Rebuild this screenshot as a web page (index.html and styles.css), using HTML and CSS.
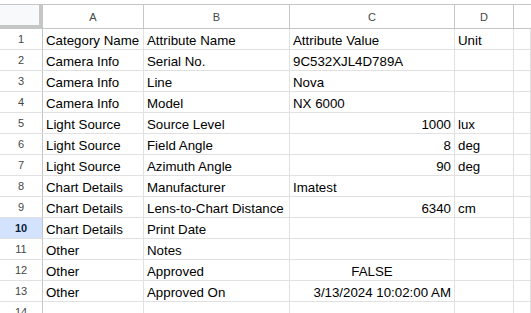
FILE: index.html
```html
<!DOCTYPE html>
<html>
<head>
<meta charset="utf-8">
<link rel="stylesheet" href="styles.css">
</head>
<body>
<div class="sheet">
  <div class="corner"></div>
  <div class="colhead">A</div>
  <div class="colhead">B</div>
  <div class="colhead">C</div>
  <div class="colhead">D</div>
  <div class="colhead last"></div>

  <div class="rowhead">1</div>
  <div class="cell">Category Name</div>
  <div class="cell">Attribute Name</div>
  <div class="cell">Attribute Value</div>
  <div class="cell">Unit</div>
  <div class="cell"></div>

  <div class="rowhead">2</div>
  <div class="cell">Camera Info</div>
  <div class="cell">Serial No.</div>
  <div class="cell">9C532XJL4D789A</div>
  <div class="cell"></div>
  <div class="cell"></div>

  <div class="rowhead">3</div>
  <div class="cell">Camera Info</div>
  <div class="cell">Line</div>
  <div class="cell">Nova</div>
  <div class="cell"></div>
  <div class="cell"></div>

  <div class="rowhead">4</div>
  <div class="cell">Camera Info</div>
  <div class="cell">Model</div>
  <div class="cell">NX 6000</div>
  <div class="cell"></div>
  <div class="cell"></div>

  <div class="rowhead">5</div>
  <div class="cell">Light Source</div>
  <div class="cell">Source Level</div>
  <div class="cell num">1000</div>
  <div class="cell">lux</div>
  <div class="cell"></div>

  <div class="rowhead">6</div>
  <div class="cell">Light Source</div>
  <div class="cell">Field Angle</div>
  <div class="cell num">8</div>
  <div class="cell">deg</div>
  <div class="cell"></div>

  <div class="rowhead">7</div>
  <div class="cell">Light Source</div>
  <div class="cell">Azimuth Angle</div>
  <div class="cell num">90</div>
  <div class="cell">deg</div>
  <div class="cell"></div>

  <div class="rowhead">8</div>
  <div class="cell">Chart Details</div>
  <div class="cell">Manufacturer</div>
  <div class="cell">Imatest</div>
  <div class="cell"></div>
  <div class="cell"></div>

  <div class="rowhead">9</div>
  <div class="cell">Chart Details</div>
  <div class="cell">Lens-to-Chart Distance</div>
  <div class="cell num">6340</div>
  <div class="cell">cm</div>
  <div class="cell"></div>

  <div class="rowhead selected">10</div>
  <div class="cell">Chart Details</div>
  <div class="cell">Print Date</div>
  <div class="cell"></div>
  <div class="cell"></div>
  <div class="cell"></div>

  <div class="rowhead">11</div>
  <div class="cell">Other</div>
  <div class="cell">Notes</div>
  <div class="cell"></div>
  <div class="cell"></div>
  <div class="cell"></div>

  <div class="rowhead">12</div>
  <div class="cell">Other</div>
  <div class="cell">Approved</div>
  <div class="cell center">FALSE</div>
  <div class="cell"></div>
  <div class="cell"></div>

  <div class="rowhead">13</div>
  <div class="cell">Other</div>
  <div class="cell">Approved On</div>
  <div class="cell num">3/13/2024 10:02:00 AM</div>
  <div class="cell"></div>
  <div class="cell"></div>

  <div class="rowhead">14</div>
  <div class="cell"></div>
  <div class="cell"></div>
  <div class="cell"></div>
  <div class="cell"></div>
  <div class="cell"></div>
</div>
</body>
</html>
```

FILE: styles.css
```css
html, body {
  margin: 0;
  padding: 0;
  background: #ffffff;
  overflow: hidden;
}

body {
  padding-top: 4px;
  font-family: "Liberation Sans", Arial, sans-serif;
}

.sheet {
  display: grid;
  grid-template-columns: 43px 101px 146px 165px 59px 1fr;
  grid-template-rows: 24px;
  grid-auto-rows: 21px;
  border-top: 1px solid #c4c7c5;
  width: 531px;
}

.sheet > div {
  box-sizing: border-box;
  border-right: 1px solid #e1e1e1;
  border-bottom: 1px solid #e1e1e1;
  white-space: nowrap;
  overflow: hidden;
}

.sheet > .corner {
  background: #f8f9fa;
  border-right: 4px solid #c4c7c5;
  border-bottom: 4px solid #c4c7c5;
}

.sheet > .colhead {
  border-right-color: #c4c7c5;
  border-bottom-color: #c4c7c5;
  font-size: 11px;
  color: #444746;
  display: flex;
  align-items: center;
  justify-content: center;
}

.sheet > .colhead.last {
  border-right: none;
}

.sheet > .rowhead {
  border-right-color: #c4c7c5;
  font-size: 11px;
  color: #444746;
  display: flex;
  align-items: center;
  justify-content: center;
}

.sheet > .rowhead.selected {
  background: #d3e3fd;
  color: #0b1d3a;
  font-weight: bold;
}

.sheet > .cell {
  font-size: 13.3px;
  line-height: 17px;
  padding: 3px 3px 0 3px;
  color: #000000;
}

.sheet > .cell.num {
  text-align: right;
}

.sheet > .cell.center {
  text-align: center;
}
```
